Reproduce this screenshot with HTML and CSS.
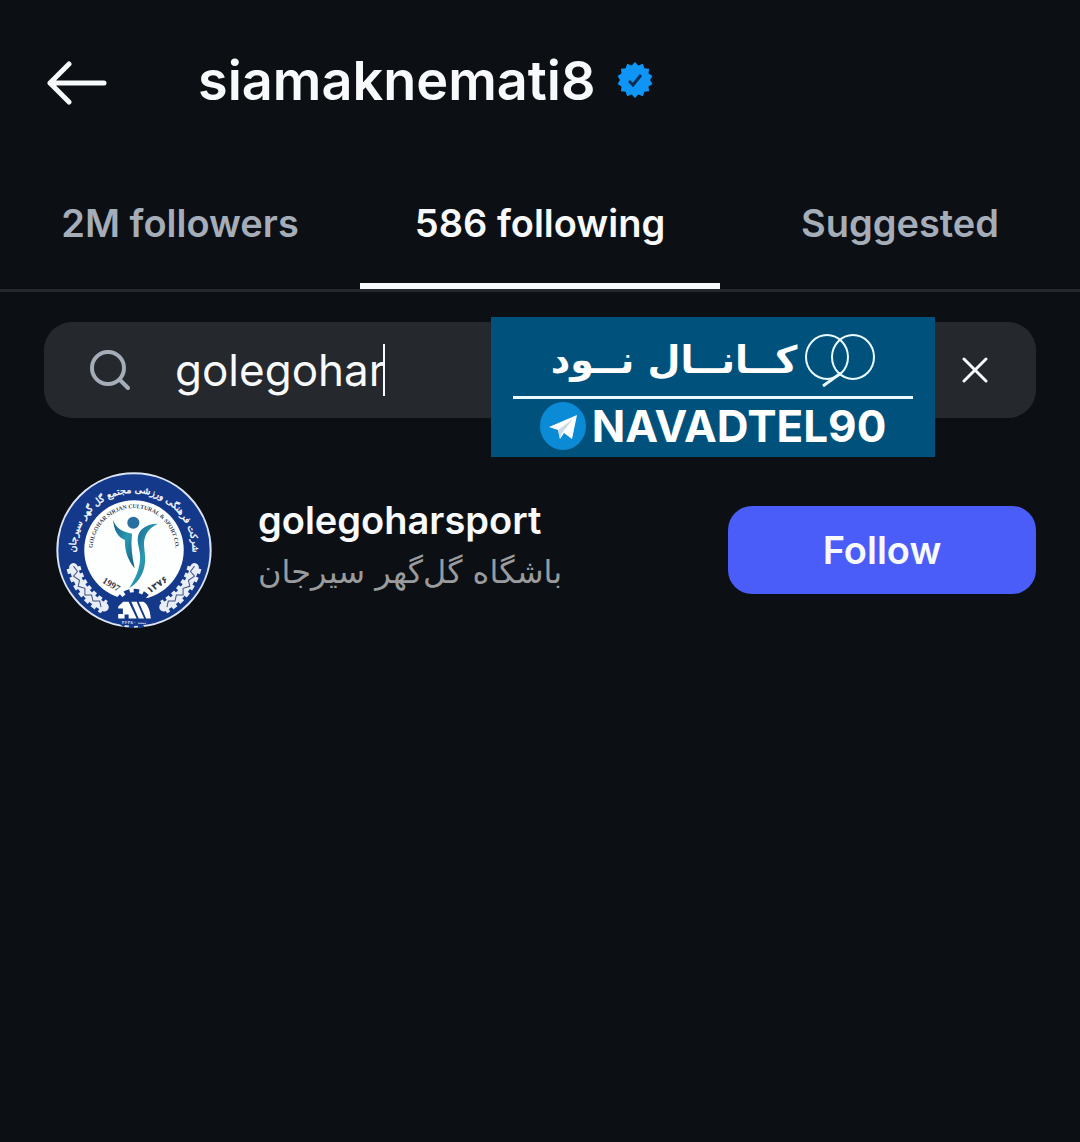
FILE: index.html
```html
<!DOCTYPE html>
<html lang="en">
<head>
  <meta charset="UTF-8" />
  <meta name="viewport" content="width=device-width, initial-scale=1.0" />
  <title>siamaknemati8 - Following</title>
  <link rel="stylesheet" href="styles.css">
</head>
<body>

  <header class="top-bar">
    <button class="back-btn" aria-label="Back">
      <svg width="60" height="46" viewBox="0 0 60 46" fill="none" stroke="#f7f9fa" stroke-width="5" stroke-linecap="round" stroke-linejoin="round">
        <path d="M22 4L3 23L22 42M3 23H57"/>
      </svg>
    </button>
    <h1>siamaknemati8</h1>
    <svg class="verified" width="36" height="36" viewBox="-18 -18 36 36" role="img" aria-label="Verified">
      <path fill="#0f95f6" d="M0 -18L3.3 -14.6L7.8 -16.2L9.4 -11.7L14.1 -11.2L13.5 -6.5L17.5 -4L15 0L17.5 4L13.5 6.5L14.1 11.2L9.4 11.7L7.8 16.2L3.3 14.6L0 18L-3.3 14.6L-7.8 16.2L-9.4 11.7L-14.1 11.2L-13.5 6.5L-17.5 4L-15 0L-17.5 -4L-13.5 -6.5L-14.1 -11.2L-9.4 -11.7L-7.8 -16.2L-3.3 -14.6Z"/>
      <path fill="none" stroke="#0a2c55" stroke-width="3" d="M-6 1L-2 5L6 -5"/>
    </svg>
  </header>

  <nav class="tabs">
    <a href="#followers">2M followers</a>
    <a href="#following" class="active">586 following</a>
    <a href="#suggested">Suggested</a>
  </nav>

  <main>
    <div class="search">
      <svg class="search-icon" width="42" height="42" viewBox="0 0 42 42" fill="none" stroke="#a5adb9" stroke-width="4" stroke-linecap="round">
        <circle cx="19" cy="19" r="16"/>
        <path d="M31 31L39 39"/>
      </svg>
      <input type="text" id="search" value="golegohar" size="9" aria-label="Search">
      <span class="caret"></span>
      <button class="clear-btn" aria-label="Clear search">
        <svg width="26" height="26" viewBox="0 0 26 26" stroke="#f7f9fa" stroke-width="3" stroke-linecap="round">
          <path d="M2 2L24 24M24 2L2 24"/>
        </svg>
      </button>

      <div class="channel">
        <div class="channel-title" lang="fa" dir="rtl">
          <svg width="70" height="54" viewBox="0 0 70 54" fill="none" stroke="#e9fbff" stroke-width="2">
            <ellipse cx="22" cy="24" rx="21" ry="22"/>
            <ellipse cx="48" cy="24" rx="21" ry="22"/>
            <path d="M36 40L18 53" stroke-width="3"/>
          </svg>
          <span>کــانــال نــود</span>
        </div>
        <div class="channel-id">
          <svg width="46" height="48" viewBox="0 0 46 48">
            <ellipse cx="23" cy="24" rx="23" ry="24" fill="#0b8bd5"/>
            <path d="M9 25L37 13L32 37L24 31L20 37L18 28Z" fill="#fff"/>
            <path d="M18 28L33 17L22 31L20 37Z" fill="#cbdbe7"/>
          </svg>
          <span>NAVADTEL90</span>
        </div>
      </div>
    </div>

    <ul class="users">
      <li class="user">
        <svg class="avatar" viewBox="38 38 464 464" role="img" aria-label="golegoharsport">
          <defs>
            <path id="ring" d="M98 300A174 174 0 1 1 442 300"/>
            <path id="inner-ring" d="M148 284A123 123 0 1 1 392 284"/>
            <linearGradient id="body" x1="0" y1="0" x2="1" y2="1">
              <stop offset="0" stop-color="#175889"/>
              <stop offset="0.5" stop-color="#2a9bb3"/>
              <stop offset="1" stop-color="#135877"/>
            </linearGradient>
          </defs>
          <circle cx="270" cy="270" r="228" fill="#14398a" stroke="#dce4f4" stroke-width="6"/>
          <circle cx="270" cy="270" r="148" fill="#fdfefe"/>
          <text class="ring-text" text-anchor="middle"><textPath href="#ring" startOffset="50%">شرکت فرهنگی ورزشی مجتمع گل گهر سیرجان</textPath></text>
          <text class="inner-text" text-anchor="middle"><textPath href="#inner-ring" startOffset="50%">GOLGOHAR SIRJAN CULTURAL &amp; SPORT CO.</textPath></text>

          <!-- wheat -->
          <g fill="none" stroke="#e8edf6" stroke-linecap="round">
            <path d="M90 322C102 370 132 412 182 440M450 322C438 370 408 412 358 440" stroke-width="26"/>
            <path d="M90 322C102 370 132 412 182 440M450 322C438 370 408 412 358 440" stroke-width="42" stroke-linecap="butt" stroke-dasharray="14 10"/>
          </g>
          <g fill="none" stroke="#40537f" stroke-width="3">
            <path d="M90 318L102 334L90 348L108 360L104 378L124 384L124 404L144 404L148 422L168 422L172 440"/>
            <path d="M450 318L438 334L450 348L432 360L436 378L416 384L416 404L396 404L392 422L372 422L368 440"/>
          </g>

          <circle cx="268" cy="189" r="18" fill="#286e9f"/>
          <path fill="url(#body)" d="M208 180C216 206 232 214 264 222C260 256 264 290 272 324C250 298 242 270 243 240C222 232 210 212 208 180Z"/>
          <path fill="url(#body)" d="M342 192C300 192 280 215 281 240C282 262 290 275 288 300C284 340 268 362 256 384C288 364 305 330 303 290C302 268 297 250 302 235C308 215 320 202 342 192Z"/>
          <text class="year" transform="translate(174 366) rotate(31)">1997</text>
          <text class="year" transform="translate(316 400) rotate(-34)">۱۳۷۶</text>

          <!-- gear -->
          <circle cx="270" cy="446" r="50" fill="#14398a"/>
          <circle cx="270" cy="446" r="54" fill="none" stroke="#14398a" stroke-width="14" stroke-dasharray="16 12"/>
          <path fill="#fff" d="M223 474V460H237V444H223V438L238 424H254L278 474H254V462H242V474ZM262 424H278L300 474H284ZM284 424H298C310 430 318 448 320 474H306Z"/>
          <text class="reg" x="270" y="490" text-anchor="middle">ثبت ۴۶۴۸۰</text>
        </svg>
        <div class="user-info">
          <h2>golegoharsport</h2>
          <p lang="fa" dir="rtl">باشگاه گل‌گهر سیرجان</p>
        </div>
        <button class="follow-btn">Follow</button>
      </li>
    </ul>
  </main>

</body>
</html>
```
FILE: styles.css
```css
* {
  box-sizing: border-box;
}

body {
  margin: 0;
  min-height: 100vh;
  font-family: Inter, sans-serif;
  background-color: #0c1014;
  color: #f7f9fa;
}

button {
  border: none;
  background: none;
  padding: 0;
  font-family: inherit;
  color: inherit;
  cursor: pointer;
}

.top-bar {
  display: flex;
  align-items: center;
  height: 160px;
  padding: 0 47px;
}

.back-btn {
  display: flex;
  margin: 6px 91px 0 0;
}

.top-bar h1 {
  margin: 0;
  font-size: 54px;
  font-weight: 600;
}

.verified {
  margin-left: 21px;
}

.tabs {
  display: grid;
  grid-template-columns: repeat(3, 1fr);
  border-bottom: 3px solid #25282d;
}

.tabs a {
  height: 129px;
  line-height: 126px;
  border-bottom: 6px solid transparent;
  text-align: center;
  font-size: 38px;
  font-weight: 600;
  color: #a5adb9;
  text-decoration: none;
}

.tabs .active {
  color: #f7f9fa;
  border-bottom-color: #f7f9fa;
}

main {
  padding: 30px 44px;
}

.search {
  position: relative;
  display: flex;
  align-items: center;
  height: 96px;
  padding: 0 48px 0 45px;
  border-radius: 28px;
  background-color: #25282d;
}

.search-icon {
  margin-right: 44px;
}

.search input {
  field-sizing: content;
  border: none;
  outline: none;
  padding: 0;
  background: none;
  color: #f7f9fa;
  font-family: inherit;
  font-size: 44px;
}

.caret {
  width: 2px;
  height: 52px;
  margin-left: -2px;
  background-color: #f7f9fa;
}

.clear-btn {
  display: flex;
  margin-left: auto;
}

/* channel tag over the search box */
.channel {
  position: absolute;
  top: -5px;
  right: 101px;
  width: 444px;
  height: 140px;
  padding: 0 22px;
  background-color: #00527c;
  color: #fff;
}

.channel-title {
  display: flex;
  align-items: center;
  justify-content: center;
  gap: 8px;
  height: 82px;
  padding-top: 6px;
  border-bottom: 3px solid #e9fbff;
  font-family: "DejaVu Sans", sans-serif;
  font-size: 38px;
  font-weight: 700;
  white-space: nowrap;
}

.channel-id {
  display: flex;
  align-items: center;
  justify-content: center;
  gap: 6px;
  height: 54px;
  font-size: 44px;
  font-weight: 700;
}

.users {
  list-style: none;
  margin: 0;
  padding: 54px 0 0 12px;
}

.user {
  display: flex;
  align-items: center;
}

.avatar {
  width: 156px;
  height: 156px;
  flex-shrink: 0;
}

.ring-text {
  font: 400 28px "DejaVu Sans", sans-serif;
  fill: #fff;
  stroke: #fff;
  stroke-width: 1px;
}

.inner-text {
  font: 700 17px "Liberation Serif", serif;
  fill: #333c4c;
}

.year {
  font: 700 28px "Liberation Serif", "DejaVu Sans", serif;
  fill: #333c4c;
}

.reg {
  font: 700 14px "DejaVu Sans", sans-serif;
  fill: #b9c9ea;
}

.user-info {
  margin-left: 46px;
}

.user-info h2 {
  margin: 0;
  font-size: 38px;
  line-height: 44px;
  font-weight: 600;
}

.user-info p {
  margin: 0;
  font-family: "DejaVu Sans", sans-serif;
  font-size: 32px;
  line-height: 60px;
  color: #999b9d;
}

.follow-btn {
  width: 308px;
  height: 88px;
  margin-left: auto;
  border-radius: 24px;
  background-color: #4a5df9;
  font-size: 38px;
  font-weight: 600;
}
```
